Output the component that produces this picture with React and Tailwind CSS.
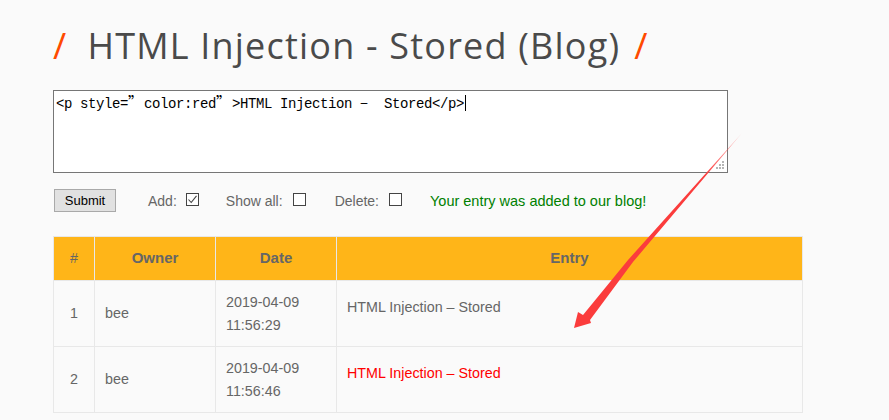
import React from 'react';

const rows = [
  { id: 1, owner: 'bee', date: '2019-04-09', time: '11:56:29', entry: 'HTML Injection – Stored', color: 'text-[#666]' },
  { id: 2, owner: 'bee', date: '2019-04-09', time: '11:56:46', entry: 'HTML Injection – Stored', color: 'text-[#f00]' },
];

function Check({ checked }) {
  return (
    <span className="flex h-[13px] w-[13px] items-center justify-center border border-[#444] bg-white">
      {checked && (
        <svg width="11" height="11" viewBox="0 0 11 11" fill="none" stroke="#444" strokeWidth="1.1">
          <path d="M1.5 5.5 L4.2 8.5 L9.5 1.8" />
        </svg>
      )}
    </span>
  );
}

// the quotes and the dash take a full 16px cell in the original CJK font
function Wide({ children }) {
  return <span className="inline-block w-[16px] font-['Noto_Sans_CJK_SC',sans-serif] text-[15px] leading-[18px]">{children}</span>;
}

function Arrow() {
  return (
    <svg className="absolute left-0 top-0" width="889" height="420" viewBox="0 0 889 420">
      <defs>
        <linearGradient id="tail" gradientUnits="userSpaceOnUse" x1="742" y1="133" x2="705" y2="177">
          <stop offset="0" stopColor="#ff3b3b" stopOpacity="0.25" />
          <stop offset="1" stopColor="#fb3c3c" />
        </linearGradient>
      </defs>
      <polygon points="742,133 633,262 590,320 591,323 574,328 578,312 583,315 628,260" fill="url(#tail)" />
    </svg>
  );
}

export default function App() {
  return (
    <div className="relative h-[420px] w-[889px] overflow-hidden bg-[#fafafa] font-['Liberation_Sans',sans-serif]">
      <div className="pl-[53px] pt-[23px]">
        <h1 className="flex h-[46px] items-center font-['Open_Sans',sans-serif] text-[36px] font-normal leading-[46px] tracking-[1.2px] text-[#4a4a4a]">
          <span className="mr-[20px] text-[#ff4a00]">/</span>
          HTML Injection - Stored (Blog)
          <span className="ml-[14px] text-[#ff4a00]">/</span>
        </h1>

        <div className="relative mt-[21px] h-[83px] w-[675px] border border-[#767676] bg-white pl-[2px] pt-[1px] font-['Liberation_Mono','Noto_Sans_CJK_SC',monospace] text-[14px] leading-[18px] tracking-[-0.4px] text-black">
          <span>&lt;p style=<Wide>”</Wide>color:red<Wide>”</Wide>&gt;HTML Injection <Wide>–</Wide> Stored&lt;/p&gt;</span>
          <span className="ml-px inline-block h-[16px] w-px translate-y-[3px] bg-black" />
          <svg className="absolute bottom-[2px] right-[2px]" width="9" height="9" viewBox="0 0 9 9" fill="#b5b5b5">
            <rect x="6" y="0" width="2" height="2" />
            <rect x="3" y="3" width="2" height="2" />
            <rect x="6" y="3" width="2" height="2" />
            <rect x="0" y="6" width="2" height="2" />
            <rect x="3" y="6" width="2" height="2" />
            <rect x="6" y="6" width="2" height="2" />
          </svg>
        </div>

        <div className="mt-[16px] flex h-[23px] items-center text-[14px] text-[#666]">
          <button className="ml-px h-[23px] w-[62px] border border-[#a9a9a9] bg-[#e1e1e1] text-[13px] text-black">Submit</button>
          <span className="ml-[32px] translate-y-px">Add:</span>
          <span className="ml-[9px] mb-[3px]"><Check checked /></span>
          <span className="ml-[27px] translate-y-px">Show all:</span>
          <span className="ml-[10px] mb-[3px]"><Check /></span>
          <span className="ml-[29px] translate-y-px">Delete:</span>
          <span className="ml-[10px] mb-[3px]"><Check /></span>
          <span className="ml-[28px] translate-y-px text-[14.5px] text-[#008000]">Your entry was added to our blog!</span>
        </div>

        <table className="mt-[24px] w-[750px] table-fixed border-collapse text-[14.3px] text-[#666]">
          <colgroup>
            <col className="w-[41px]" />
            <col className="w-[121px]" />
            <col className="w-[121px]" />
            <col />
          </colgroup>
          <thead>
            <tr className="h-[44px] bg-[#ffb518]">
              <th className="border border-[#e8e8e8] font-normal">#</th>
              <th className="border border-[#e8e8e8] text-[15px] font-bold">Owner</th>
              <th className="border border-[#e8e8e8] text-[15px] font-bold">Date</th>
              <th className="border border-[#e8e8e8] text-[15px] font-bold">Entry</th>
            </tr>
          </thead>
          <tbody>
            {rows.map((row) => (
              <tr key={row.id} className="h-[66px]">
                <td className="border border-[#e8e8e8] text-center">{row.id}</td>
                <td className="border border-[#e8e8e8] pl-[10px]">{row.owner}</td>
                <td className="border border-[#e8e8e8] pl-[10px] leading-[23px]">
                  {row.date}
                  <br />
                  {row.time}
                </td>
                <td className={`border border-[#e8e8e8] pb-[12px] pl-[10px] ${row.color}`}>{row.entry}</td>
              </tr>
            ))}
          </tbody>
        </table>
      </div>
      <Arrow />
    </div>
  );
}
